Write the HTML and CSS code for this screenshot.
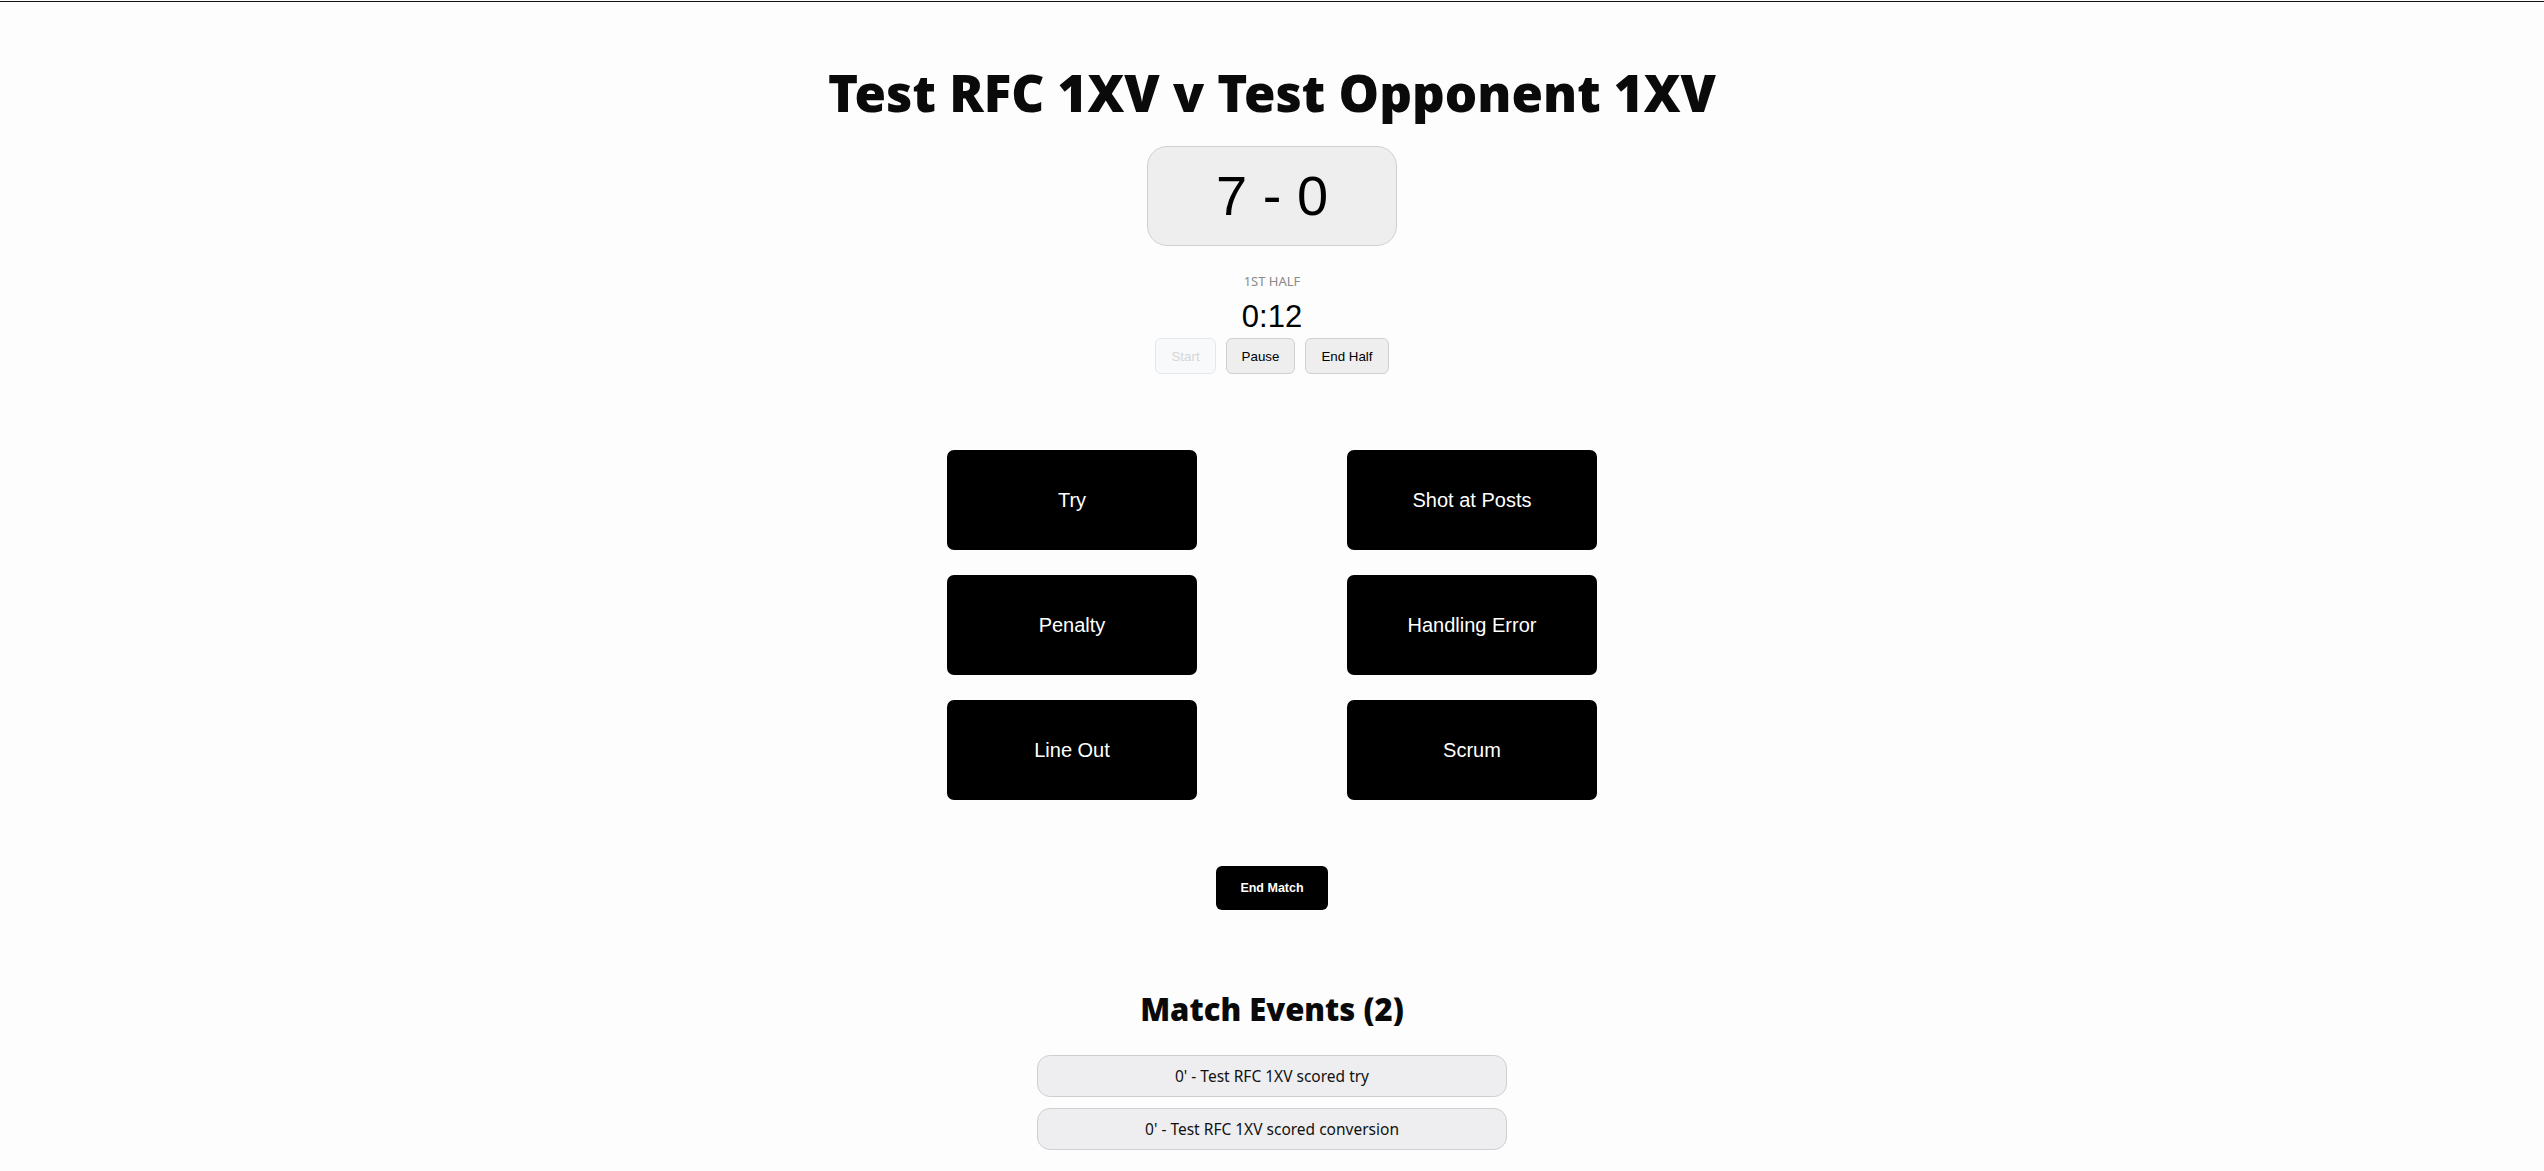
FILE: index.html
```html
<!DOCTYPE html>
<html lang="en">
<head>
<meta charset="utf-8">
<title>Test RFC 1XV v Test Opponent 1XV</title>
<link rel="stylesheet" href="styles.css">
</head>
<body>
<div class="topline"></div>
<main class="match">
  <h1 class="title">Test RFC 1XV v Test Opponent 1XV</h1>
  <div class="score">7 - 0</div>
  <div class="clock">
    <div class="half">1ST HALF</div>
    <div class="time">0:12</div>
    <div class="clock-buttons">
      <button class="clock-btn" disabled>Start</button>
      <button class="clock-btn">Pause</button>
      <button class="clock-btn">End Half</button>
    </div>
  </div>
  <div class="actions">
    <button class="action">Try</button>
    <button class="action">Shot at Posts</button>
    <button class="action">Penalty</button>
    <button class="action">Handling Error</button>
    <button class="action">Line Out</button>
    <button class="action">Scrum</button>
  </div>
  <button class="end-match">End Match</button>
  <h2 class="events-title">Match Events (2)</h2>
  <ul class="events">
    <li class="event">0' - Test RFC 1XV scored try</li>
    <li class="event">0' - Test RFC 1XV scored conversion</li>
  </ul>
</main>
</body>
</html>
```
FILE: styles.css
```css
html, body {
  margin: 0;
  padding: 0;
  background: #fdfdfd;
}
body {
  font-family: "Noto Sans", "Open Sans", sans-serif;
  color: #111;
}
.topline {
  height: 1px;
  margin-top: 1px;
  background: #111;
}
.match {
  display: flex;
  flex-direction: column;
  align-items: center;
}
.title {
  font-family: "Noto Sans", "Open Sans", sans-serif;
  font-weight: 900;
  font-size: 51px;
  line-height: 60px;
  margin: 60px 0 0 0;
  color: #0a0a0a;
}
.score {
  margin-top: 24px;
  width: 248px;
  height: 98px;
  border: 1px solid #d0d0d3;
  border-radius: 20px;
  background: #eeeeef;
  font-family: "Liberation Sans", Arial, sans-serif;
  font-size: 56px;
  line-height: 98px;
  text-align: center;
  color: #000;
}
.clock {
  display: flex;
  flex-direction: column;
  align-items: center;
  margin-top: 26px;
}
.half {
  font-size: 13px;
  line-height: 18px;
  color: #8a8a8a;
}
.time {
  margin-top: 8px;
  font-family: "Liberation Sans", Arial, sans-serif;
  font-size: 31px;
  line-height: 38px;
  color: #000;
}
.clock-buttons {
  display: flex;
  gap: 10px;
  margin-top: 2px;
}
.clock-btn {
  font-family: "Liberation Sans", Arial, sans-serif;
  font-size: 13.333px;
  height: 36px;
  padding: 0 15px;
  border: 1px solid #cfcfd2;
  border-radius: 6px;
  background: #eeeeef;
  color: #000;
}
.clock-btn:disabled {
  background: #f8f9fa;
  border-color: #e6e7e9;
  color: #d4d6d8;
}
.actions {
  display: grid;
  grid-template-columns: 250px 250px;
  column-gap: 150px;
  row-gap: 25px;
  margin-top: 76px;
}
.action {
  height: 100px;
  border: none;
  border-radius: 7px;
  background: #000;
  color: #fff;
  font-family: "Liberation Sans", Arial, sans-serif;
  font-size: 20px;
}
.end-match {
  margin-top: 66px;
  width: 112px;
  height: 44px;
  border: none;
  border-radius: 6px;
  background: #000;
  color: #fff;
  font-family: "Liberation Sans", Arial, sans-serif;
  font-size: 12.5px;
  font-weight: 700;
}
.events-title {
  font-family: "Noto Sans", "Open Sans", sans-serif;
  font-weight: 900;
  font-size: 31px;
  line-height: 40px;
  margin: 79px 0 0 0;
  color: #0a0a0a;
}
.events {
  list-style: none;
  margin: 26px 0 0 0;
  padding: 0;
  width: 470px;
  display: flex;
  flex-direction: column;
  gap: 11px;
}
.event {
  height: 40px;
  line-height: 40px;
  border: 1px solid #cfcfd2;
  border-radius: 13px;
  background: #eeeef0;
  text-align: center;
  font-size: 15.5px;
  color: #111;
}
```
